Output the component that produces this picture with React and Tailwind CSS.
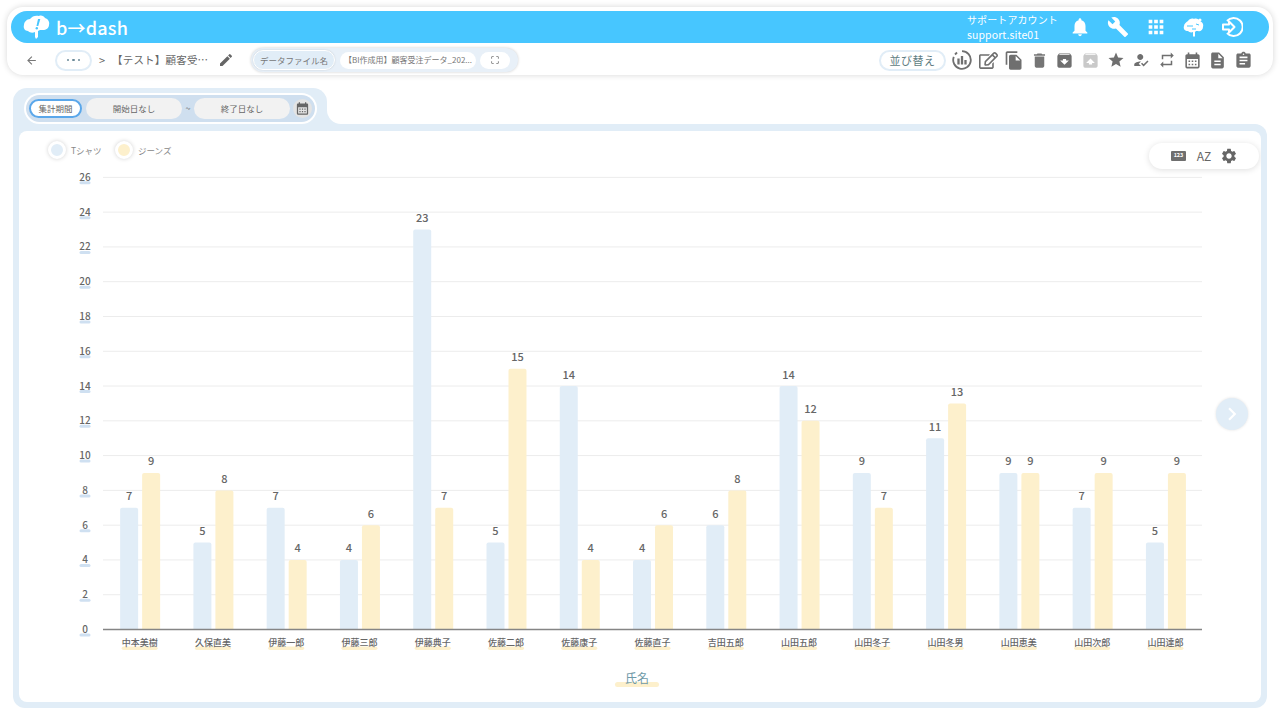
import React from "react";
import { MdArrowBack, MdEdit, MdNotifications, MdBuild, MdApps, MdFileCopy, MdDelete, MdArchive, MdUnarchive, MdStar, MdHowToReg, MdRepeat, MdCalendarMonth, MdDescription, MdAssignment, MdSettings, MdChevronRight, MdCropFree } from "react-icons/md";
import { FaRegEdit } from "react-icons/fa";

const data = [
  ["中本美樹", 7, 9], ["久保直美", 5, 8], ["伊藤一郎", 7, 4], ["伊藤三郎", 4, 6], ["伊藤典子", 23, 7],
  ["佐藤二郎", 5, 15], ["佐藤康子", 14, 4], ["佐藤直子", 4, 6], ["吉田五郎", 6, 8], ["山田五郎", 14, 12],
  ["山田冬子", 9, 7], ["山田冬男", 11, 13], ["山田恵美", 9, 9], ["山田次郎", 7, 9], ["山田達郎", 5, 9],
];
const Y0 = 629.5;
const U = 17.39;
const ticks = Array.from({ length: 14 }, (_, i) => i * 2);

function Logo() {
  return (
    <div className="flex items-center gap-[5px]">
      <svg width="28" height="26" viewBox="0 0 28 26">
        <path d="M7 5c2-3 6-4 9-3 2-1 5 0 6 2 3 1 5 4 4 7 0 3-3 5-6 5h-3l-2 1v6l-2 2-1-2v-5c-2 1-5 1-7-1-3 0-5-3-4-6 0-3 3-6 6-6z" fill="#fff" />
        <path d="M15 5l-1.500 7h1.800l2-7z" fill="#47c6ff" />
        <circle cx="13.800" cy="14.300" r="1.200" fill="#47c6ff" />
      </svg>
      <span className="text-[18px] leading-none text-white font-medium tracking-[0.2px]">b→dash</span>
    </div>
  );
}

function BrainIcon() {
  return (
    <svg width="22" height="22" viewBox="0 0 22 22">
      <path d="M5 5c1-2 4-3 6-2 2-1 5 0 6 2 2 1 4 3 3 6 0 3-3 5-5 4h-2l-1 1v4l-1 1-1-1v-4c-2 1-4 0-5-1-3 0-5-2-4-5 0-2 2-4 4-5z" fill="#fff" />
      <path d="M4 10h6M13 8l3 1M9 13h4" stroke="#47c6ff" strokeWidth="1" fill="none" />
      <circle cx="17" cy="4" r="1.500" fill="#fff" />
    </svg>
  );
}

function LoginIcon() {
  return (
    <svg width="22" height="22" viewBox="0 0 22 22" fill="none" stroke="#fff" strokeWidth="2">
      <path d="M6 5a9 9 0 1 1 0 12" />
      <path d="M2 8.500h6V5.500l5.500 5.500L8 16.500v-3H2z" strokeLinejoin="round" fill="#47c6ff" />
    </svg>
  );
}

function DashCircle() {
  return (
    <svg width="20" height="20" viewBox="0 0 20 20" fill="none" stroke="#6f6f6f">
      <path d="M10 1.200a8.800 8.800 0 1 1-8.200 5.600" strokeWidth="1.800" />
      <path d="M3 4.500l2-2" strokeWidth="1.800" />
      <path d="M6.500 8.500v6M10 6v8.500M13.500 10v4.500" strokeWidth="2.300" />
    </svg>
  );
}

const toolIcons = [
  [MdFileCopy, 21, "#6f6f6f"], [MdDelete, 19, "#757575"], [MdArchive, 19, "#6f6f6f"], [MdUnarchive, 19, "#c9c9c9"],
  [MdStar, 18, "#6f6f6f"], [MdHowToReg, 18, "#6f6f6f"], [MdRepeat, 18, "#6f6f6f"], [MdCalendarMonth, 19, "#6f6f6f"],
  [MdDescription, 19, "#6f6f6f"], [MdAssignment, 19, "#6f6f6f"],
];

function Chart() {
  return (
    <svg className="block" width="1242" height="571" viewBox="19 131 1242 571">
      {ticks.map((t) => {
        const y = Y0 - t * U;
        return (
          <g key={t}>
            {t > 0 && <line x1="103" x2="1202" y1={y} y2={y} stroke="#ececec" strokeWidth="1" />}
            <rect x="79.500" y={y + 4} width="11" height="3" rx="1.500" fill="#cfe0f1" />
            <text x="85" y={y + 3.500} textAnchor="middle" fontSize="10" fontWeight="500" fill="#666">{t}</text>
          </g>
        );
      })}
      {data.map(([name, a, b], i) => {
        const c = 103 + 73.27 * (i + 0.5);
        return (
          <g key={name}>
            <path d={`M${c - 19.500} ${Y0}V${Y0 - a * U + 2}q0-2 2-2h14q2 0 2 2V${Y0}z`} fill="#e1edf7" />
            <path d={`M${c + 2.500} ${Y0}V${Y0 - b * U + 2}q0-2 2-2h14q2 0 2 2V${Y0}z`} fill="#fdf0cc" />
            <text x={c - 10.500} y={Y0 - a * U - 7.500} textAnchor="middle" fontSize="11" fontWeight="500" fill="#666">{a}</text>
            <text x={c + 11.500} y={Y0 - b * U - 7.500} textAnchor="middle" fontSize="11" fontWeight="500" fill="#666">{b}</text>
            <rect x={c - 18} y="646.500" width="36" height="3.500" rx="1.700" fill="#fdf0cc" />
            <text x={c} y="645.500" textAnchor="middle" fontSize="9" fontWeight="500" fill="#666">{name}</text>
          </g>
        );
      })}
      <line x1="103" x2="1202" y1="629.500" y2="629.500" stroke="#858585" strokeWidth="1.500" />
      <rect x="615" y="682" width="44" height="5" rx="2.500" fill="#fdf0cc" />
      <text x="637" y="683" textAnchor="middle" fontSize="12" fill="#6f9aa8">氏名</text>
    </svg>
  );
}

export default function App() {
  return (
    <div className="w-[1280px] h-[720px] overflow-hidden bg-white font-['Noto_Sans_CJK_JP','Noto_Sans',sans-serif] text-[#666] pt-[7px]">
      <div className="mx-[7px] h-[68px] rounded-[16px] bg-white shadow-[0_0_6px_rgba(0,0,0,0.16)] px-[4px] pt-[4px]">
        <div className="h-[32px] rounded-full bg-[#47c6ff] flex items-center pl-[12px] pr-[26px]">
          <Logo />
          <div className="ml-auto w-[102px] text-white leading-none">
            <div className="text-[10px] tracking-[0.1px] leading-[14px]">サポートアカウント</div>
            <div className="text-[10.500px] leading-[15px] tracking-[0.1px]">support.site01</div>
          </div>
          <div className="flex items-center gap-[16px]">
            <MdNotifications size={22} color="#fff" />
            <MdBuild size={22} color="#fff" />
            <MdApps size={22} color="#fff" />
            <BrainIcon />
            <LoginIcon />
          </div>
        </div>
        <div className="flex items-center h-[32px] mt-[1px] pl-[14px] pr-[16px]">
          <MdArrowBack size={13} color="#777" />
          <div className="ml-[17px] w-[37px] h-[21px] rounded-full border-2 border-[#e1edf7] flex items-center justify-center gap-[3px]">
            <span className="w-[2.500px] h-[2.500px] rounded-full bg-[#6b8a98]" />
            <span className="w-[2.500px] h-[2.500px] rounded-full bg-[#6b8a98]" />
            <span className="w-[2.500px] h-[2.500px] rounded-full bg-[#6b8a98]" />
          </div>
          <span className="ml-[7px] text-[11px] w-[13px]">&gt;</span>
          <span className="text-[10.500px] tracking-[0.2px] w-[96px] whitespace-nowrap">【テスト】顧客受…</span>
          <MdEdit size={16} color="#666" className="ml-[10px]" />
          <div className="ml-[17px] w-[267px] h-[24px] rounded-full bg-[#e8f0f8] shadow-[0_0_3px_rgba(0,0,0,0.2)] flex items-center pl-[2px]">
            <div className="w-[82px] h-[20px] rounded-full bg-[#e1edf7] border border-white shadow-[0_0_2px_rgba(0,0,0,0.15)] flex items-center justify-center text-[8.500px] text-[#777]">データファイル名</div>
            <div className="ml-[5px] w-[136px] h-[17px] rounded-full bg-white flex items-center justify-center text-[8px] text-[#777] whitespace-nowrap">【BI作成用】顧客受注データ_202...</div>
            <div className="ml-[4px] w-[30px] h-[17px] rounded-full bg-white flex items-center justify-center">
              <MdCropFree size={10} color="#777" />
            </div>
          </div>
          <div className="ml-auto w-[67px] h-[21px] rounded-full border-2 border-[#e1edf7] flex items-center justify-center text-[11px] tracking-[0.5px] text-[#5f7d82]">並び替え</div>
          <div className="ml-[6px] w-[20px] flex justify-center"><DashCircle /></div>
          <div className="ml-[6px] w-[20px] flex justify-center"><FaRegEdit size={19} color="#6f6f6f" /></div>
          {toolIcons.map(([I, s, c], i) => (
            <div key={i} className="ml-[5.500px] w-[20px] flex justify-center"><I size={s} color={c} /></div>
          ))}
        </div>
      </div>

      <div className="mx-[13px] mt-[13px]">
        <div className="flex h-[36px]">
          <div className="w-[314px] rounded-t-[14px] bg-[#e1edf7] pl-[11px] pt-[5px]">
            <div className="w-[293px] h-[31px] rounded-full bg-white p-[2px]">
              <div className="h-[27px] rounded-full bg-[#cfdfef] flex items-center pl-[3px]">
                <div className="w-[53px] h-[19px] rounded-full bg-white border-2 border-[#5aa7ea] flex items-center justify-center text-[8.500px] text-[#666]">集計期間</div>
                <div className="ml-[4px] w-[96px] h-[21px] rounded-full bg-[#f2f2f2] flex items-center justify-center text-[8.500px]">開始日なし</div>
                <span className="w-[12px] text-center text-[9px]">~</span>
                <div className="w-[96px] h-[21px] rounded-full bg-[#f2f2f2] flex items-center justify-center text-[8.500px]">終了日なし</div>
                <div className="ml-[3px] w-[19px] h-[19px] rounded-full bg-[#e4e4e4] flex items-center justify-center">
                  <MdCalendarMonth size={15} color="#666" />
                </div>
              </div>
            </div>
          </div>
          <div className="w-[14px] bg-[#e1edf7]">
            <div className="h-full bg-white rounded-bl-[14px]" />
          </div>
        </div>
        <div className="h-[584px] rounded-[12px] rounded-tl-none bg-[#e1edf7] px-[6px] pt-[7px] pb-[6px]">
          <div className="relative h-[571px] rounded-[8px] bg-white overflow-hidden">
            <Chart />
            <div className="absolute left-[29px] top-[10px] flex items-center text-[8.500px] text-[#888]">
              <span className="w-[18px] h-[18px] rounded-full bg-[#e1edf7] border-[3px] border-white shadow-[0_0_4px_rgba(0,0,0,0.18)]" />
              <span className="ml-[5px] w-[44px]">Tシャツ</span>
              <span className="w-[18px] h-[18px] rounded-full bg-[#fdf0cc] border-[3px] border-white shadow-[0_0_4px_rgba(0,0,0,0.18)]" />
              <span className="ml-[5px]">ジーンズ</span>
            </div>
            <div className="absolute left-[1130px] top-[12px] w-[110px] h-[26px] rounded-full bg-white shadow-[0_1px_6px_rgba(0,0,0,0.13)] flex items-center pl-[22px]">
              <span className="w-[15px] h-[10px] rounded-[1px] bg-[#6f6f6f] text-white text-[5.500px] font-bold flex items-center justify-center leading-none">123</span>
              <span className="ml-[10px] w-[16px] text-center text-[12px] text-[#666] leading-none">AZ</span>
              <MdSettings size={18} color="#666" className="ml-[8px]" />
            </div>
            <div className="absolute left-[1197px] top-[267px] w-[32px] h-[32px] rounded-full bg-[#e1edf7] shadow-[0_0_3px_rgba(0,0,0,0.12)] flex items-center justify-center">
              <MdChevronRight size={26} color="#fff" />
            </div>
          </div>
        </div>
      </div>
    </div>
  );
}
